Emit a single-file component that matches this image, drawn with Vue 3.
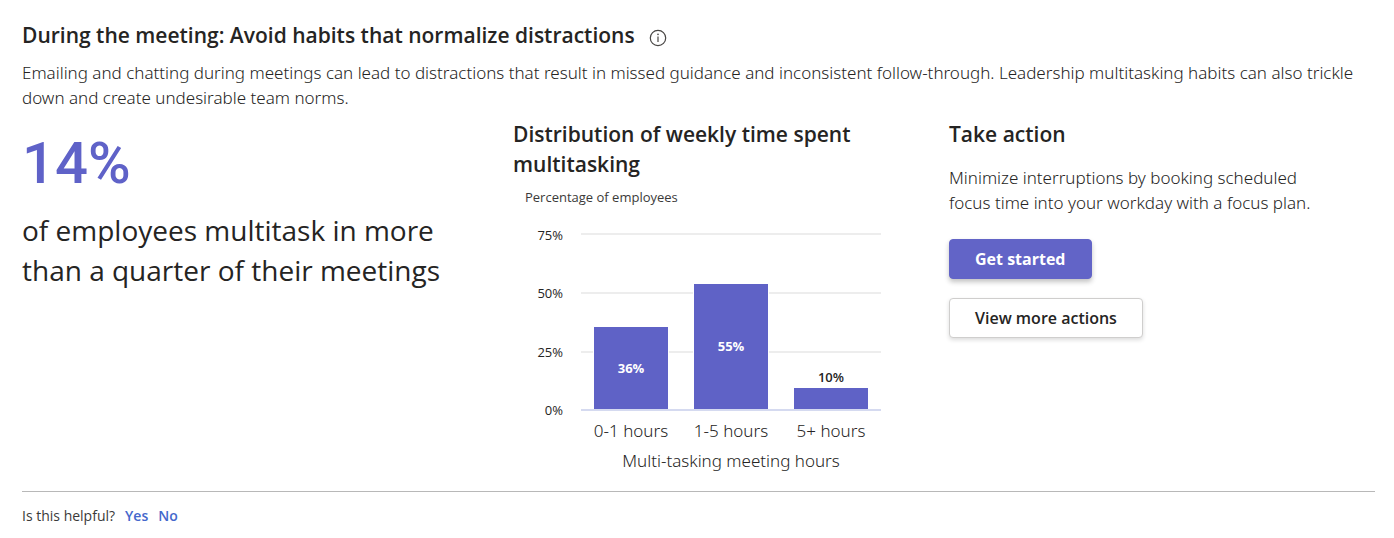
<script setup>
const ticks = ['75%', '50%', '25%', '0%']
const axisMax = 75
const bars = [
  { range: '0-1 hours', label: '36%', value: 35 },
  { range: '1-5 hours', label: '55%', value: 53.4 },
  { range: '5+ hours', label: '10%', value: 8.9, above: true },
]
const barHeight = (bar) => ({ height: `${(bar.value / axisMax) * 100}%` })
</script>

<template>
  <main class="card">
    <header class="intro">
      <div class="title-row">
        <h1>During the meeting: Avoid habits that normalize distractions</h1>
        <button class="info" type="button" aria-label="More information">
          <svg viewBox="0 0 18 18" width="18" height="18" fill="none" stroke="#484644">
            <circle cx="9" cy="9" r="7.7" stroke-width="1.2" />
            <path d="M9 7.6V13" stroke-width="1.2" />
            <circle cx="9" cy="5.4" r="0.8" fill="#484644" stroke="none" />
          </svg>
        </button>
      </div>
      <p class="body">
        Emailing and chatting during meetings can lead to distractions that result in missed guidance and inconsistent follow-through. Leadership multitasking habits can also trickle down and create undesirable team norms.
      </p>
    </header>

    <div class="columns">
      <section class="stat">
        <p class="figure">14%</p>
        <p class="caption">of employees multitask in more than a quarter of their meetings</p>
      </section>

      <section class="chart">
        <h2>Distribution of weekly time spent multitasking</h2>
        <p class="y-title">Percentage of employees</p>
        <div class="graph">
          <ul class="ticks">
            <li v-for="tick in ticks" :key="tick">{{ tick }}</li>
          </ul>
          <div class="plot">
            <div class="slots">
              <div v-for="bar in bars" :key="bar.range" class="slot">
                <span v-if="bar.above" class="above">{{ bar.label }}</span>
                <div class="bar" :style="barHeight(bar)">
                  <span v-if="!bar.above">{{ bar.label }}</span>
                </div>
              </div>
            </div>
          </div>
          <div class="ranges">
            <span v-for="bar in bars" :key="bar.range">{{ bar.range }}</span>
          </div>
          <p class="x-title">Multi-tasking meeting hours</p>
        </div>
      </section>

      <section class="action">
        <h2>Take action</h2>
        <p class="body">Minimize interruptions by booking scheduled focus time into your workday with a focus plan.</p>
        <div class="buttons">
          <button class="btn primary" type="button">Get started</button>
          <button class="btn" type="button">View more actions</button>
        </div>
      </section>
    </div>

    <footer class="feedback">
      <span>Is this helpful?</span>
      <a href="#yes">Yes</a>
      <a href="#no">No</a>
    </footer>
  </main>
</template>

<style>
body {
  margin: 0;
  background: #fff;
}
</style>

<style scoped>
.card {
  padding: 20px 19px 10px 22px;
  font-family: "Open Sans", "Noto Sans", sans-serif;
  color: #252423;
}
h1,
h2,
p,
ul {
  margin: 0;
  padding: 0;
}
h1,
h2 {
  font-size: 21px;
  line-height: 30px;
  font-weight: 600;
}
.title-row {
  display: flex;
  align-items: center;
  gap: 14px;
}
.info {
  display: flex;
  margin-top: 6px;
  padding: 0;
  border: 0;
  background: none;
}
.body {
  font-family: "Noto Sans", "Open Sans", sans-serif;
  font-size: 17px;
  line-height: 25px;
  font-weight: 300;
}
.intro .body {
  margin-top: 10px;
}
.columns {
  display: grid;
  grid-template-columns: 491fr 436fr 426fr;
  margin-top: 9px;
}
.figure {
  margin-top: 4px;
  font-family: Roboto, "Open Sans", sans-serif;
  font-size: 58px;
  line-height: 80px;
  font-weight: 500;
  color: #5f62c8;
}
.caption {
  margin-top: 7px;
  padding-right: 50px;
  font-size: 28px;
  line-height: 40px;
}
.chart {
  padding-right: 68px;
}
.y-title {
  margin-top: 8px;
  padding-left: 12px;
  font-size: 13px;
  line-height: 20px;
  color: #3b3a39;
}
.graph {
  display: grid;
  grid-template-columns: 50px 1fr;
  column-gap: 18px;
  margin-top: 26px;
}
.ticks {
  display: flex;
  flex-direction: column;
  justify-content: space-between;
  margin: -8px 0 -9px;
  list-style: none;
  text-align: right;
  font-size: 13px;
  line-height: 20px;
}
.plot {
  height: 176px;
  border-bottom: 2px solid #d5daf0;
  background: repeating-linear-gradient(#ededed 0 2px, transparent 2px 59px);
}
.slots {
  display: grid;
  grid-template-columns: repeat(3, 1fr);
  height: 100%;
}
.slot {
  display: flex;
  flex-direction: column;
  align-items: center;
  justify-content: flex-end;
}
.bar {
  display: flex;
  align-items: center;
  justify-content: center;
  width: 74%;
  background: #5f62c6;
  box-shadow: 0 0 0 1px #fff;
  clip-path: inset(-1px -1px 0 -1px);
  color: #fff;
  font-size: 13px;
  font-weight: 700;
}
.above {
  font-size: 13px;
  line-height: 22px;
  font-weight: 600;
}
.ranges {
  grid-column: 2;
  display: grid;
  grid-template-columns: repeat(3, 1fr);
  margin-top: 7px;
  text-align: center;
  white-space: nowrap;
}
.x-title {
  grid-column: 2;
  margin-top: 5px;
  text-align: center;
}
.ranges,
.x-title {
  font-family: "Noto Sans", "Open Sans", sans-serif;
  font-size: 17px;
  line-height: 25px;
  font-weight: 300;
}
.action .body {
  max-width: 380px;
  margin-top: 16px;
}
.buttons {
  display: flex;
  flex-direction: column;
  align-items: flex-start;
  gap: 19px;
  margin-top: 24px;
}
.btn {
  height: 40px;
  padding: 0 25px;
  border: 1px solid #cfcecd;
  border-radius: 4px;
  background: #fff;
  box-shadow: 0 2px 4px rgba(0, 0, 0, 0.14);
  color: #252423;
  font-family: inherit;
  font-size: 16px;
  font-weight: 600;
}
.btn.primary {
  border-color: #6264c7;
  background: #6264c7;
  box-shadow: 0 3px 5px rgba(0, 0, 0, 0.24);
  color: #fff;
  font-weight: 700;
}
.feedback {
  display: flex;
  gap: 10px;
  margin-top: 18px;
  padding-top: 14px;
  border-top: 1px solid #b8b8b8;
  font-size: 14px;
  line-height: 20px;
  color: #3b3a39;
}
.feedback a {
  color: #4468cc;
  font-weight: 600;
  text-decoration: none;
}
</style>
